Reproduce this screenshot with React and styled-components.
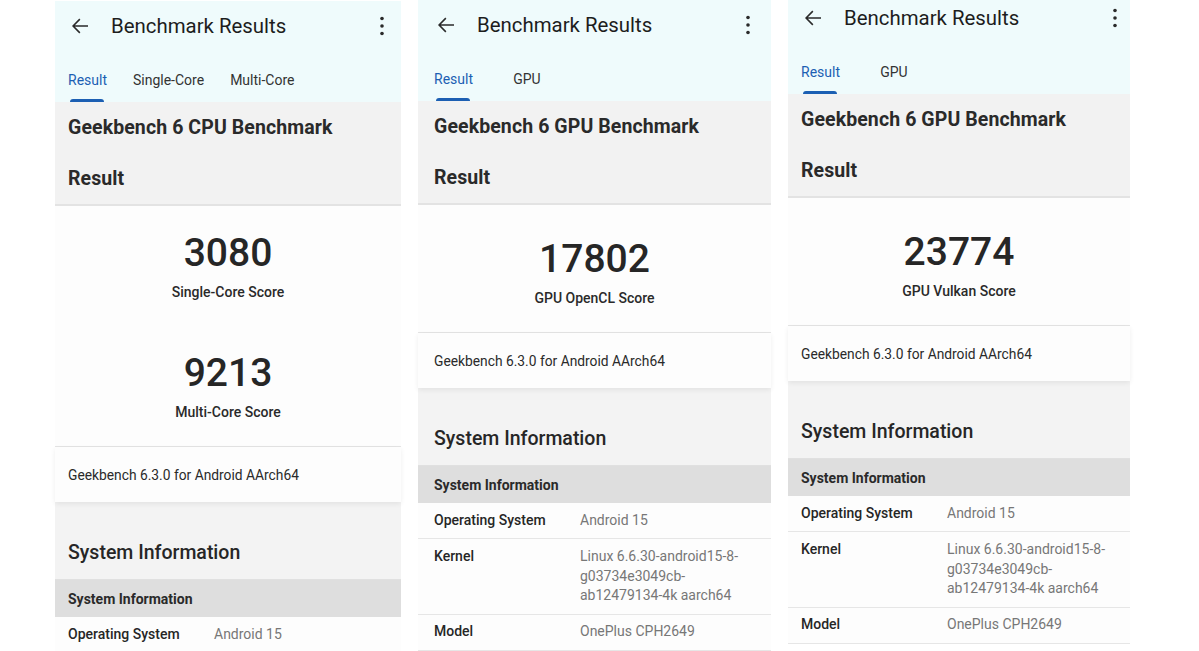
import React from 'react';
import styled, { createGlobalStyle } from 'styled-components';

const GlobalStyle = createGlobalStyle`
  html, body {
    margin: 0;
    padding: 0;
    background: #ffffff;
    overflow: hidden;
  }
  body {
    font-family: Roboto, "Noto Sans", "Liberation Sans", sans-serif;
    color: #222;
    -webkit-font-smoothing: antialiased;
  }
`;

const Page = styled.div`
  width: 1199px;
  height: 651px;
  overflow: hidden;
  display: flex;
  align-items: flex-start;
  gap: 17px;
  padding-left: 55px;
  box-sizing: border-box;
`;

const Panel = styled.div`
  --pad: ${p => p.$pad}px;
  width: ${p => p.$w}px;
  flex: none;
  margin-top: ${p => p.$shift}px;
  background: #ffffff;
`;

const Header = styled.div`
  background: #effbfc;
`;

const TopBar = styled.div`
  height: 50px;
  display: flex;
  align-items: center;
  padding-left: var(--pad);
  padding-right: ${p => p.$right}px;
`;

const IconBtn = styled.div`
  width: 24px;
  height: 24px;
  display: flex;
  align-items: center;
  justify-content: center;
  color: #2a2a2a;
  flex: none;
`;

const Title = styled.div`
  flex: 1;
  margin-left: 19px;
  font-size: 20.4px;
  color: #1d1d1d;
`;

const Tabs = styled.div`
  height: 51px;
  display: flex;
  align-items: flex-end;
  gap: ${p => p.$gap}px;
  padding-left: var(--pad);
`;

const Tab = styled.div`
  display: flex;
  flex-direction: column;
  align-items: center;
  font-size: 14px;
  line-height: 18px;
  color: ${p => (p.$active ? '#1c5fb3' : '#333')};

  &::after {
    content: '';
    display: block;
    margin-top: 10px;
    width: 34px;
    height: 3px;
    border-radius: 3px 3px 0 0;
    background: ${p => (p.$active ? '#1c5fb3' : 'transparent')};
  }
`;

const GraySection = styled.div`
  background: #f2f2f2;
  border-bottom: 2px solid #e3e3e3;
`;

const SectionTitle = styled.div`
  height: 51px;
  display: flex;
  align-items: center;
  padding-left: var(--pad);
  font-size: 19.5px;
  font-weight: 700;
  color: #2a2a2a;
  letter-spacing: 0.1px;
`;

const ScoreArea = styled.div`
  background: #fdfdfd;
  border-bottom: 1px solid #e4e4e4;
`;

const Score = styled.div`
  display: flex;
  flex-direction: column;
  align-items: center;
  padding: ${p => p.$top}px 0 24px;
`;

const ScoreValue = styled.div`
  font-size: 39px;
  line-height: 46px;
  font-weight: 500;
  color: #262626;
`;

const ScoreLabel = styled.div`
  margin-top: 6px;
  font-size: 14px;
  line-height: 20px;
  font-weight: 500;
  color: #2a2a2a;
`;

const VersionRow = styled.div`
  height: 55px;
  display: flex;
  align-items: center;
  padding-left: var(--pad);
  font-size: 13.8px;
  color: #2a2a2a;
  background: #fdfdfd;
  position: relative;
  z-index: 1;
  box-shadow: 0 2px 5px rgba(0, 0, 0, 0.07);
`;

const InfoHeading = styled.div`
  background: #f3f3f3;
  padding: 38px 0 13px var(--pad);
  font-size: 19.5px;
  line-height: 26px;
  font-weight: 500;
  color: #262626;
  border-bottom: 1px solid #e0e0e0;
`;

const TableHead = styled.div`
  height: 37px;
  display: flex;
  align-items: center;
  padding-left: var(--pad);
  background: #dedede;
  font-size: 14px;
  font-weight: 700;
  color: #2a2a2a;
`;

const Row = styled.div`
  min-height: 36px;
  display: flex;
  align-items: ${p => (p.$multi ? 'flex-start' : 'center')};
  padding: ${p => (p.$multi ? '8px' : '0')} 0 ${p => (p.$multi ? '8px' : '0')} var(--pad);
  box-sizing: border-box;
  border-bottom: 1px solid #e6e6e6;
  background: #fdfdfd;
  font-size: 14px;
  line-height: 19.5px;
`;

const RowLabel = styled.div`
  width: 146px;
  flex: none;
  font-weight: 500;
  color: #262626;
`;

const RowValue = styled.div`
  color: #777;
  white-space: pre-line;
`;

const BackIcon = () => (
  <svg width="24" height="24" viewBox="0 0 24 24" fill="currentColor">
    <path d="M20 11.2H6.9l5.5-5.5-1.1-1.1L4 12l7.3 7.4 1.1-1.1-5.5-5.5H20z" />
  </svg>
);

const MoreIcon = () => (
  <svg width="24" height="24" viewBox="0 0 24 24" fill="currentColor">
    <circle cx="12" cy="4.5" r="1.8" />
    <circle cx="12" cy="12" r="1.8" />
    <circle cx="12" cy="19.5" r="1.8" />
  </svg>
);

const kernel = 'Linux 6.6.30-android15-8-\ng03734e3049cb-\nab12479134-4k aarch64';

const allRows = [
  { label: 'Operating System', value: 'Android 15' },
  { label: 'Kernel', value: kernel, multi: true },
  { label: 'Model', value: 'OnePlus CPH2649' },
];

const panels = [
  {
    id: 'cpu',
    width: 346,
    pad: 13,
    right: 7,
    shift: 1,
    tabGap: 26,
    tabs: ['Result', 'Single-Core', 'Multi-Core'],
    title: 'Geekbench 6 CPU Benchmark',
    scoreTop: 24,
    scores: [
      { value: '3080', label: 'Single-Core Score' },
      { value: '9213', label: 'Multi-Core Score' },
    ],
    rows: allRows,
  },
  {
    id: 'opencl',
    width: 353,
    pad: 16,
    right: 11,
    shift: 0,
    tabGap: 37,
    tabs: ['Result', 'GPU'],
    title: 'Geekbench 6 GPU Benchmark',
    scoreTop: 31,
    scores: [{ value: '17802', label: 'GPU OpenCL Score' }],
    rows: allRows,
  },
  {
    id: 'vulkan',
    width: 342,
    pad: 13,
    right: 3,
    shift: -7,
    tabGap: 37,
    tabs: ['Result', 'GPU'],
    title: 'Geekbench 6 GPU Benchmark',
    scoreTop: 31,
    scores: [{ value: '23774', label: 'GPU Vulkan Score' }],
    rows: allRows,
  },
];

const ResultPanel = ({ data }) => (
  <Panel $w={data.width} $pad={data.pad} $shift={data.shift}>
    <Header>
      <TopBar $right={data.right}>
        <IconBtn><BackIcon /></IconBtn>
        <Title>Benchmark Results</Title>
        <IconBtn><MoreIcon /></IconBtn>
      </TopBar>
      <Tabs $gap={data.tabGap}>
        {data.tabs.map((t, i) => (
          <Tab key={t} $active={i === 0}>{t}</Tab>
        ))}
      </Tabs>
    </Header>
    <GraySection>
      <SectionTitle>{data.title}</SectionTitle>
      <SectionTitle>Result</SectionTitle>
    </GraySection>
    <ScoreArea>
      {data.scores.map(s => (
        <Score key={s.label} $top={data.scoreTop}>
          <ScoreValue>{s.value}</ScoreValue>
          <ScoreLabel>{s.label}</ScoreLabel>
        </Score>
      ))}
    </ScoreArea>
    <VersionRow>Geekbench 6.3.0 for Android AArch64</VersionRow>
    <InfoHeading>System Information</InfoHeading>
    <TableHead>System Information</TableHead>
    {data.rows.map(r => (
      <Row key={r.label} $multi={r.multi}>
        <RowLabel>{r.label}</RowLabel>
        <RowValue>{r.value}</RowValue>
      </Row>
    ))}
  </Panel>
);

export default function App() {
  return (
    <>
      <GlobalStyle />
      <Page>
        {panels.map(p => (
          <ResultPanel key={p.id} data={p} />
        ))}
      </Page>
    </>
  );
}
